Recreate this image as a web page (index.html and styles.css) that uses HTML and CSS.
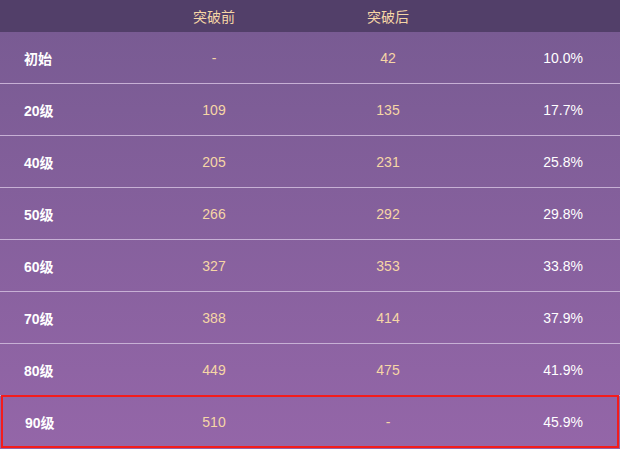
FILE: index.html
```html
<!DOCTYPE html>
<html lang="zh-CN">
<head>
    <meta charset="UTF-8">
    <meta name="viewport" content="width=device-width, initial-scale=1.0">
    <title>突破属性</title>
    <link rel="stylesheet" href="styles.css">
</head>
<body>
    <div class="stat-table">
        <div class="row head">
            <div class="cell level"></div>
            <div class="cell num">突破前</div>
            <div class="cell num">突破后</div>
            <div class="cell pct"></div>
        </div>
        <div class="rows">
            <div class="row">
                <div class="cell level">初始</div>
                <div class="cell num">-</div>
                <div class="cell num">42</div>
                <div class="cell pct">10.0%</div>
            </div>
            <div class="row">
                <div class="cell level">20级</div>
                <div class="cell num">109</div>
                <div class="cell num">135</div>
                <div class="cell pct">17.7%</div>
            </div>
            <div class="row">
                <div class="cell level">40级</div>
                <div class="cell num">205</div>
                <div class="cell num">231</div>
                <div class="cell pct">25.8%</div>
            </div>
            <div class="row">
                <div class="cell level">50级</div>
                <div class="cell num">266</div>
                <div class="cell num">292</div>
                <div class="cell pct">29.8%</div>
            </div>
            <div class="row">
                <div class="cell level">60级</div>
                <div class="cell num">327</div>
                <div class="cell num">353</div>
                <div class="cell pct">33.8%</div>
            </div>
            <div class="row">
                <div class="cell level">70级</div>
                <div class="cell num">388</div>
                <div class="cell num">414</div>
                <div class="cell pct">37.9%</div>
            </div>
            <div class="row">
                <div class="cell level">80级</div>
                <div class="cell num">449</div>
                <div class="cell num">475</div>
                <div class="cell pct">41.9%</div>
            </div>
            <div class="row current">
                <div class="cell level">90级</div>
                <div class="cell num">510</div>
                <div class="cell num">-</div>
                <div class="cell pct">45.9%</div>
            </div>
        </div>
    </div>
</body>
</html>
```

FILE: styles.css
```css
body {
    margin: 0;
    padding: 0;
    font-family: 'Liberation Sans', 'Noto Sans CJK SC', sans-serif;
    font-size: 14px;
    background-color: #9264a6;
}
.stat-table {
    width: 620px;
}
.row {
    display: grid;
    grid-template-columns: 127px 174px 174px 1fr;
    align-items: center;
    height: 51px;
    border-bottom: 1px solid #c7b0d5;
}
.row.head {
    height: 32px;
    border-bottom: none;
    background-color: #523f69;
}
.rows {
    background: linear-gradient(to bottom, #795b93, #9466a8);
}
.cell {
    color: #f6d6a6;
}
.cell.level {
    padding-left: 24px;
    font-weight: bold;
    color: #ffffff;
}
.cell.num {
    text-align: center;
}
.cell.pct {
    text-align: right;
    padding-right: 37px;
    color: #ffffff;
}
.row.current {
    grid-template-columns: 124px 174px 174px 1fr;
    height: 53px;
    box-sizing: border-box;
    width: 618px;
    margin-left: 1px;
    border: 2px solid #f41c1c;
    margin-top: -1px;
}
.row.current .level {
    padding-left: 22px;
}
.row.current .pct {
    padding-right: 34px;
}
```
